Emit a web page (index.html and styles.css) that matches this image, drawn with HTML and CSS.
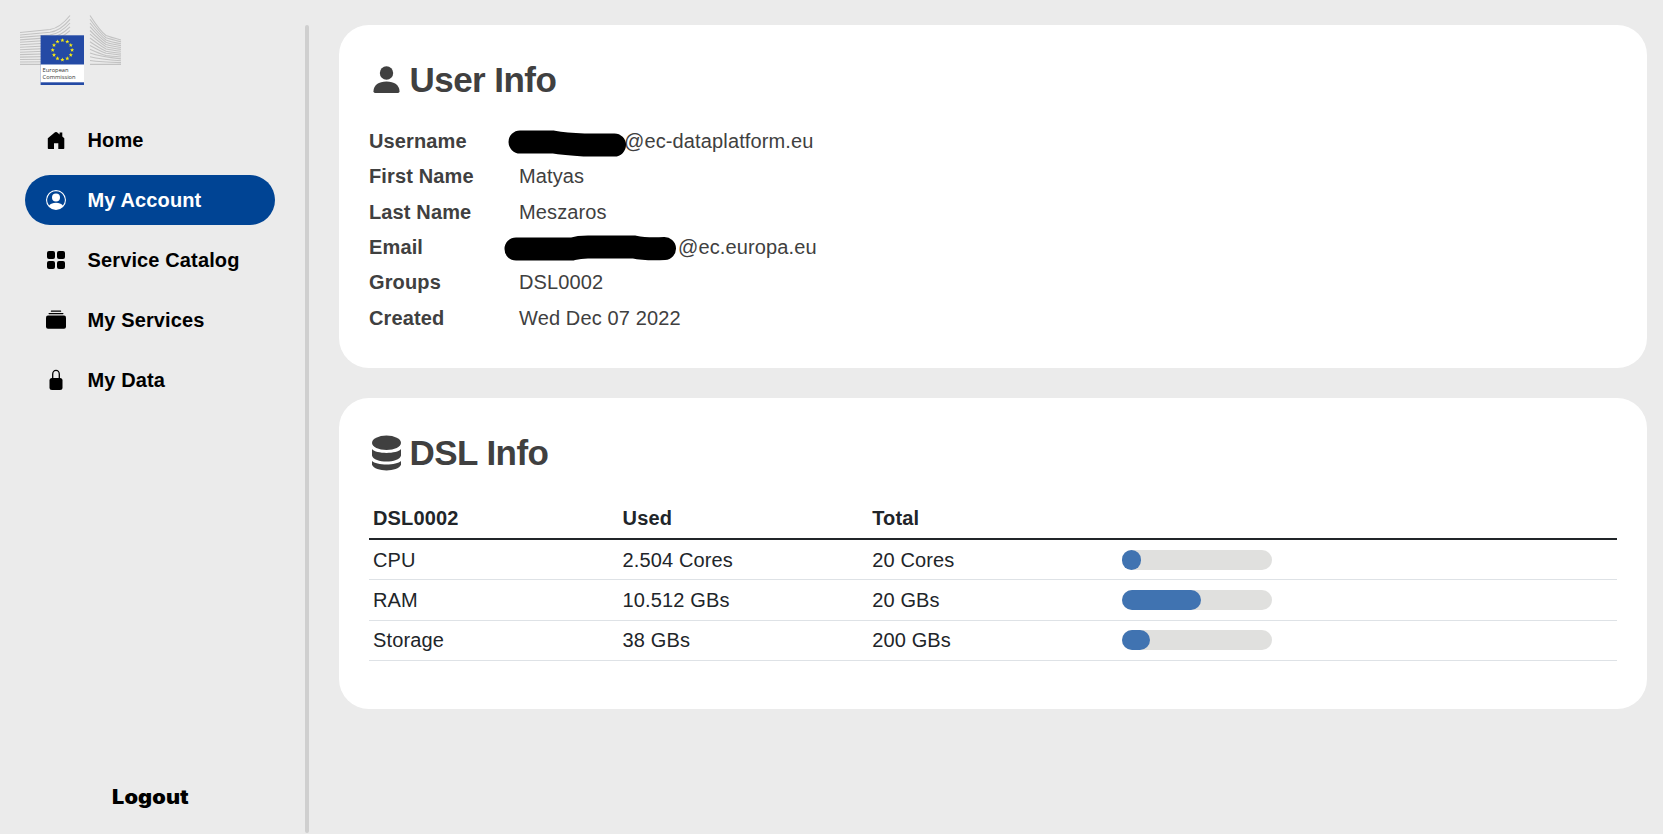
FILE: index.html
```html
<!DOCTYPE html>
<html lang="en">
<head>
<meta charset="utf-8">
<title>My Account</title>
<link rel="stylesheet" href="styles.css">
</head>
<body>
<div class="app">
  <aside class="sidebar">
    <svg class="logo" viewBox="0 0 102 72" width="102" height="72">
      <g class="wing">
        <path d="M0 17.5L30 14.5Q40 13 50 .5M0 20L30 17.2Q40 16 50 4.3M0 22.4L30 20Q40 18.8 50 8M0 24.9L30 22.6Q40 21.6 50 11.8M0 27.3L30 25.3Q40 24.4 50 15.6M0 29.8L30 28M0 32.2L30 30.7M0 34.7L30 33.4M0 37.2L30 36M0 39.6L30 38.8M0 42.1L30 41.5M0 44.5L30 44.2M0 47L30 46.8M0 49.4H30"/>
        <path d="M70 .5Q80 16 86 20.5Q90 22 101 25M70 4.2Q80 18 86 22.8Q90 24 101 26.9M70 8Q80 20.5 86 25Q91 27 101 28.8M70 11.7Q80 23 86 27.2Q91 29 101 30.6M70 15.5Q80 25.5 86 29.5Q91 31 101 32.5M70 19.2Q80 28 86 31.7Q91 33 101 34.4M70 23Q80 30.5 86 34Q91 35 101 36.3M70 26.7Q80 33.5 86 36.2Q91 37 101 38.2M70 30.5Q80 36 86 38.3Q91 39 101 40.1M70 34.2Q80 38.8 86 40.5Q91 41.2 101 42M70 38Q80 41.5 101 43.9M70 41.7Q80 44.2 101 45.7M70 45.5Q80 47 101 47.6M70 49.4H101"/>
      </g>
      <rect class="flag" x="20.6" y="20.3" width="43.4" height="49.7"/>
      <rect class="label" x="20.6" y="49.5" width="43.4" height="17.8"/>
      <defs><path id="star" d="M0-2.1L.6-.7 2.1-.6.9.3 1.3 1.8 0 1-1.3 1.8-.9.3-2.1-.6-.6-.7z"/></defs>
      <g class="stars" transform="translate(42.4 35)">
        <use href="#star" y="-9.7"/><use href="#star" x="4.9" y="-8.4"/><use href="#star" x="8.4" y="-4.9"/><use href="#star" x="9.7"/><use href="#star" x="8.4" y="4.9"/><use href="#star" x="4.9" y="8.4"/><use href="#star" y="9.7"/><use href="#star" x="-4.9" y="8.4"/><use href="#star" x="-8.4" y="4.9"/><use href="#star" x="-9.7"/><use href="#star" x="-8.4" y="-4.9"/><use href="#star" x="-4.9" y="-8.4"/>
      </g>
      <text class="logo-text" x="22.6" y="57" textLength="26" lengthAdjust="spacingAndGlyphs">European</text>
      <text class="logo-text" x="22.6" y="63.9" textLength="33" lengthAdjust="spacingAndGlyphs">Commission</text>
    </svg>
    <nav class="nav">
      <a class="nav-item"><svg class="icon" viewBox="0 0 24 24"><path d="M3.8 10.3L11 4.3Q12 3.6 13 4.3L15.6 6.4V4.4H18.3V8.6L20.3 10.3V20.2Q20.3 21 19.5 21H14.300V15.2H10V21H4.6Q3.8 21 3.8 20.2z"/></svg>Home</a>
      <a class="nav-item active"><svg class="icon" viewBox="0 0 24 24"><path fill-rule="evenodd" d="M12 2a10 10 0 1 0 0 20a10 10 0 0 0 0-20zM12 3.2a8.8 8.8 0 0 1 6.9 14.2C17.3 15.600 15 14.700 12 14.700S6.700 15.600 5.100 17.400A8.800 8.800 0 0 1 12 3.200z"/><circle cx="12" cy="9.500" r="4"/></svg>My Account</a>
      <a class="nav-item"><svg class="icon" viewBox="0 0 24 24"><rect x="3" y="3" width="8" height="8" rx="2"/><rect x="13" y="3" width="8" height="8" rx="2"/><rect x="3" y="13" width="8" height="8" rx="2"/><rect x="13" y="13" width="8" height="8" rx="2"/></svg>Service Catalog</a>
      <a class="nav-item"><svg class="icon" viewBox="0 0 24 24"><rect x="6.800" y="2.600" width="10.400" height="1.200" rx=".6"/><rect x="4.500" y="5" width="15" height="1.200" rx=".6"/><rect x="2" y="7.500" width="20" height="13.200" rx="2"/></svg>My Services</a>
      <a class="nav-item"><svg class="icon" viewBox="0 0 24 24"><path d="M8.700 11V6.200a3.300 3.800 0 0 1 6.600 0V11" fill="none" stroke="currentColor" stroke-width="1.300"/><rect x="5.500" y="10" width="13" height="12" rx="2.500"/></svg>My Data</a>
    </nav>
    <a class="logout">Logout</a>
  </aside>
  <div class="divider"></div>
  <main class="content">
    <section class="card user-card">
      <h2 class="title"><svg class="title-icon" viewBox="0 0 34 36"><circle cx="17.500" cy="11" r="6.700"/><path d="M4.500 29.200C4.500 23.200 9.700 19.500 17.500 19.500S30.500 23.200 30.500 29.200Q30.500 30.900 29 30.900H6Q4.500 30.900 4.500 29.200z"/></svg>User Info</h2>
      <dl class="info">
        <dt>Username</dt>
        <dd><svg class="redaction" width="118" height="28" viewBox="0 0 118 28"><path d="M12 13H45Q57 15 76 16H106.500"/></svg><span class="username">@ec-dataplatform.eu</span></dd>
        <dt>First Name</dt><dd>Matyas</dd>
        <dt>Last Name</dt><dd>Meszaros</dd>
        <dt>Email</dt>
        <dd><svg class="redaction redaction-email" width="172" height="28" viewBox="0 0 172 28"><path d="M12 16H68Q75 14 84 14H130Q142 16.500 160.500 15.500"/></svg><span class="email">@ec.europa.eu</span></dd>
        <dt>Groups</dt><dd>DSL0002</dd>
        <dt>Created</dt><dd>Wed Dec 07 2022</dd>
      </dl>
    </section>
    <section class="card dsl-card">
      <h2 class="title"><svg class="title-icon" viewBox="0 0 34 36"><ellipse cx="17.500" cy="7.800" rx="14.500" ry="7.300"/><path d="M3 14C7 19.200 28 19.200 32 14V20.500C30 28.600 5 28.600 3 20.500z"/><path d="M3 26C7 30.600 28 30.600 32 26V29.800C29 37.300 6 37.300 3 29.800z"/></svg>DSL Info</h2>
      <table class="usage">
        <thead><tr><th>DSL0002</th><th>Used</th><th>Total</th><th></th><th></th></tr></thead>
        <tbody>
          <tr><td>CPU</td><td>2.504 Cores</td><td>20 Cores</td><td><div class="bar"><div class="fill" style="width:12.5%"></div></div></td><td></td></tr>
          <tr><td>RAM</td><td>10.512 GBs</td><td>20 GBs</td><td><div class="bar"><div class="fill" style="width:52.56%"></div></div></td><td></td></tr>
          <tr><td>Storage</td><td>38 GBs</td><td>200 GBs</td><td><div class="bar"><div class="fill" style="width:19%"></div></div></td><td></td></tr>
        </tbody>
      </table>
    </section>
  </main>
</div>
</body>
</html>
```
FILE: styles.css
```css
* { box-sizing: border-box; }
body { margin: 0; background: #ebebeb; color: #404040; font: 20px "Liberation Sans", Arial, sans-serif; letter-spacing: .13px; }
.app { display: flex; height: 834px; overflow: hidden; }

.sidebar { display: flex; flex-direction: column; width: 305px; padding: 15px 30px 0 20px; color: #000; }
.logo { display: block; flex: none; letter-spacing: 0; }
.wing { fill: none; stroke: #c2c2c2; stroke-width: 1.1; }
.flag { fill: #244aa5; }
.label { fill: #fff; }
.stars { fill: #f5ea14; }
.logo-text { font: 6px "Open Sans", sans-serif; fill: #333; }
.nav { display: flex; flex-direction: column; gap: 10px; margin-top: 28px; padding-left: 5px; }
.nav-item { display: flex; align-items: center; gap: 19.5px; width: 250px; height: 50px; padding-left: 19px; border-radius: 25px; font-weight: 700; }
.nav-item.active { background: #004494; color: #fff; }
.icon { width: 24px; height: 24px; fill: currentColor; }
.logout { align-self: flex-start; margin: auto 0 25px 92px; font: 900 19.5px/24px Inter, sans-serif; transform: scaleX(1.11); transform-origin: left; }

.divider { width: 4px; height: 808px; margin-top: 25px; border-radius: 2px; background: #cfcfcf; }

.content { display: flex; flex: 1; flex-direction: column; gap: 30px; padding: 25px 16px 0 30px; }
.card { padding: 0 30px; border-radius: 30px; background: #fff; }
.user-card { height: 343px; }
.dsl-card { height: 311px; }
.title { display: flex; align-items: center; gap: 6.5px; height: 40px; margin: 35px 0 0; font-size: 35px; letter-spacing: -.55px; }
.title-icon { width: 34px; height: 36px; fill: currentColor; }

.info { display: grid; grid-template-columns: 150px 1fr; grid-auto-rows: 35.35px; margin: 24px 0 0; line-height: 35.35px; }
.info dt { font-weight: 700; }
.info dd { position: relative; margin: 0; }
.redaction { position: absolute; z-index: 1; top: 5px; left: -11px; fill: none; stroke: #000; stroke-width: 23; stroke-linecap: round; }
.redaction-email { left: -15px; top: 3px; }
.username { margin-left: 105px; }
.email { margin-left: 159px; }

.usage { width: 100%; margin-top: 25px; table-layout: fixed; border-spacing: 0; color: #212529; text-align: left; }
.usage th { height: 42px; padding: 0 4px; border-bottom: 2px solid #212529; }
.usage td { height: 40.33px; padding: 1px 4px 0; border-bottom: 1px solid #dee2e6; }
.bar { width: 150px; height: 20px; margin-top: -1.3px; border-radius: 10px; background: #e0e0de; }
.fill { height: 100%; border-radius: 10px; background: #4073b1; }
```
